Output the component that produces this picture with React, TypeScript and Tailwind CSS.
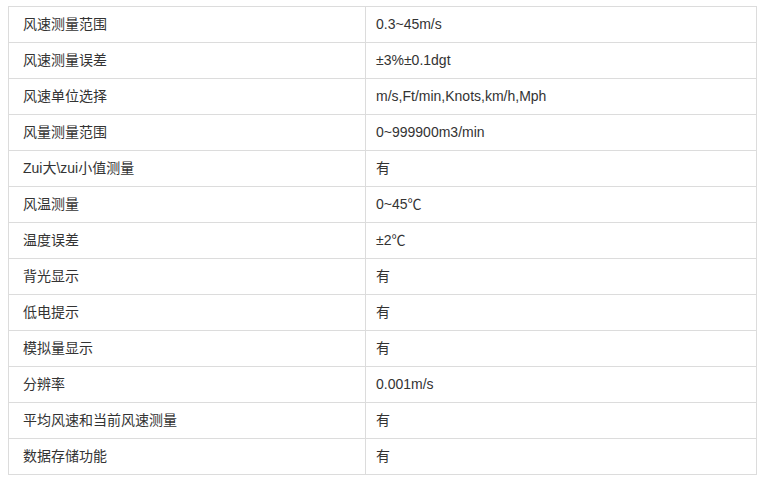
const rows: [string, string][] = [
  ["风速测量范围", "0.3~45m/s"],
  ["风速测量误差", "±3%±0.1dgt"],
  ["风速单位选择", "m/s,Ft/min,Knots,km/h,Mph"],
  ["风量测量范围", "0~999900m3/min"],
  ["Zui大\\zui小值测量", "有"],
  ["风温测量", "0~45℃"],
  ["温度误差", "±2℃"],
  ["背光显示", "有"],
  ["低电提示", "有"],
  ["模拟量显示", "有"],
  ["分辨率", "0.001m/s"],
  ["平均风速和当前风速测量", "有"],
  ["数据存储功能", "有"],
];

export default function App() {
  return (
    <div className="min-h-[482px] bg-white pl-[8px] pt-[6px] font-['Liberation_Sans','Noto_Sans_CJK_SC',sans-serif] text-[14px] text-[#333]">
      <table className="w-[749px] border-collapse">
        <tbody>
          {rows.map(([label, value]) => (
            <tr key={label} className="h-[36px]">
              <td className="w-[357px] border border-[#dcdcdc] pl-[14px] align-middle">{label}</td>
              <td className="border border-[#dcdcdc] pl-[10px] align-middle">{value}</td>
            </tr>
          ))}
        </tbody>
      </table>
    </div>
  );
}
